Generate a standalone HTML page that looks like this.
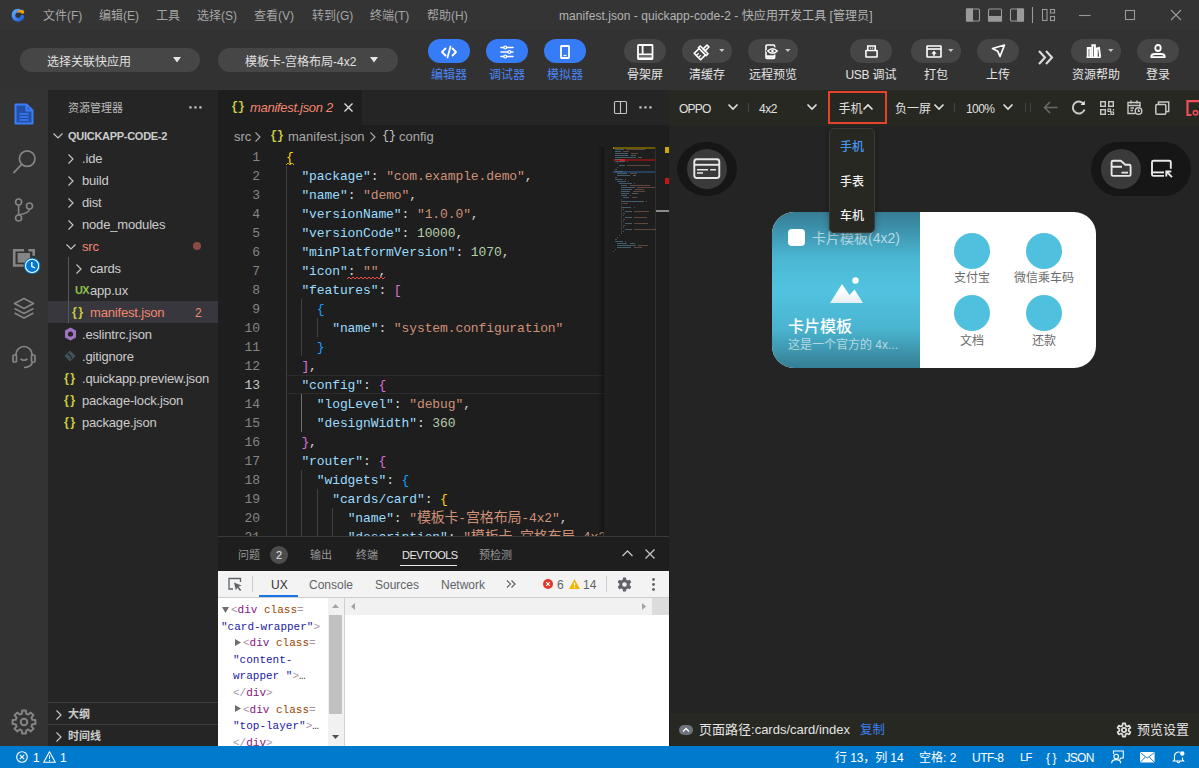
<!DOCTYPE html>
<html lang="zh-CN">
<head>
<meta charset="utf-8">
<title>manifest.json - quickapp-code-2 - 快应用开发工具 [管理员]</title>
<style>
*{box-sizing:border-box;margin:0;padding:0}
html,body{width:1199px;height:768px;overflow:hidden;background:#1e1e1e}
body{position:relative;font-family:"Liberation Sans","Noto Sans CJK SC",sans-serif;font-size:13px;color:#ccc}
.abs{position:absolute}
.t{position:absolute;white-space:nowrap;line-height:1}
svg{position:absolute;overflow:visible}
.mi{top:10px;font-size:12px;color:#a6a6a6}
.pill{top:9px;height:24px;border-radius:12px;background:#464646}
.pill.blue{background:#367cf7}
.sel{top:18px;width:180px;height:24px;border-radius:12px;background:#464646}
.tl{top:39px;width:80px;text-align:center;font-size:12px;color:#e4e4e4}
.tl.bl{color:#4a86f7}
.tr{font-size:13px;color:#ccc;letter-spacing:-0.17px}
.sx{top:5.600px;font-size:12px;color:#fff}
.ln{margin-top:1px;left:0;width:42px;text-align:right;font-family:"Liberation Mono",monospace;font-size:13px;letter-spacing:-0.1px;line-height:19px;color:#858585}
.ln.act{color:#c6c6c6}
.cl{margin-top:1px;left:68px;font-family:"Liberation Mono","Noto Sans CJK SC",monospace;font-size:13px;letter-spacing:-0.1px;line-height:19px;white-space:pre;color:#d4d4d4}
.cl .cj{font-size:14px;letter-spacing:-0.2px}
.k{color:#9cdcfe}.s{color:#ce9178}.n{color:#b5cea8}.p{color:#d4d4d4}.b1{color:#ffd700}.b2{color:#da70d6}.b3{color:#179fff}
.el{margin-top:1px;font-family:"Liberation Mono",monospace;font-size:11px;letter-spacing:0;line-height:17px;color:#333}
.tg{color:#a894a6}.tn{color:#881280}.an{color:#994500}.av{color:#1a1aa6}
.pt{top:13px;font-size:12px;color:#e0e0e0}
.mm{height:1.300px;opacity:.6}
/* regions */
#titlebar{left:0;top:0;width:1199px;height:30px;background:#343434}
#toolbar{left:0;top:30px;width:1199px;height:60px;background:#323232}
#activity{left:0;top:90px;width:48px;height:656px;background:#333333}
#sidebar{left:48px;top:90px;width:170px;height:656px;background:#252526}
#editor{left:218px;top:90px;width:451px;height:446px;background:#1e1e1e;overflow:hidden}
#panel{left:218px;top:536px;width:451px;height:210px;background:#1e1e1e;overflow:hidden}
#preview{left:669px;top:90px;width:530px;height:656px;background:#242424;overflow:hidden}
#status{left:0;top:746px;width:1199px;height:22px;background:#007acc;color:#fff}
</style>
</head>
<body>
<div id="titlebar" class="abs">
<svg style="left:11px;top:7px" width="16" height="16" viewBox="11 7 16 16"><defs><linearGradient id="lg1" x1="0" y1="0" x2="1" y2="1"><stop offset="0" stop-color="#5aa6fb"/><stop offset="1" stop-color="#1f62dc"/></linearGradient></defs><path d="M19.200 10.700A4.600 4.600 0 1 0 22.400 16.800" fill="none" stroke="url(#lg1)" stroke-width="3.700" stroke-linecap="round"/><path d="M16.200 13Q17.600 10.300 21.300 9.800Q24.600 10.100 24.200 12.600Q23.500 14.300 21.700 13.600Q19.600 11.300 16.200 13Z" fill="#fb9e0a"/></svg>
<span class="t mi" style="left:43px">文件(F)</span>
<span class="t mi" style="left:99px">编辑(E)</span>
<span class="t mi" style="left:156px">工具</span>
<span class="t mi" style="left:197px">选择(S)</span>
<span class="t mi" style="left:254px">查看(V)</span>
<span class="t mi" style="left:312px">转到(G)</span>
<span class="t mi" style="left:370px">终端(T)</span>
<span class="t mi" style="left:427px">帮助(H)</span>
<span class="t" id="wtitle" style="left:559px;top:10px;font-size:12px;letter-spacing:0.06px;color:#b4b4b4">manifest.json - quickapp-code-2 - 快应用开发工具 [管理员]</span>
<svg style="left:960px;top:0" width="239" height="30" viewBox="960 0 239 30" fill="none" stroke="#9a9a9a" stroke-width="1.1">
<rect x="966.5" y="9" width="13" height="12" rx="1"/><rect x="966.5" y="9" width="6" height="12" fill="#9a9a9a"/>
<rect x="988.5" y="9" width="13" height="12" rx="1"/><rect x="988.5" y="16.5" width="13" height="4.5" fill="#9a9a9a"/>
<rect x="1010.5" y="9" width="13" height="12" rx="1"/><rect x="1017.5" y="9" width="6" height="12" fill="#9a9a9a"/>
<path d="M1032.5 7V23"/>
<rect x="1042.5" y="9.5" width="4.5" height="11"/><rect x="1050.5" y="9.5" width="4" height="3.5"/><rect x="1050.5" y="16.5" width="4" height="4"/>
<path d="M1079 15.5H1090.500"/>
<rect x="1125.500" y="10.500" width="9" height="9"/>
<path d="M1171 10L1181 20M1181 10L1171 20"/>
</svg>
</div>
<div id="toolbar" class="abs">
<div class="abs sel" style="left:20px"></div><span class="t" style="left:47px;top:26px;font-size:12px;color:#e0e0e0">选择关联快应用</span><svg style="left:173px;top:27px" width="8" height="5.500" viewBox="0 0 9 6"><path d="M0 0H9L4.500 6Z" fill="#e6e6e6"/></svg>
<div class="abs sel" style="left:218px"></div><span class="t" style="left:245px;top:26px;font-size:12px;color:#e0e0e0">模板卡-宫格布局-4x2</span><svg style="left:370px;top:27px" width="8" height="5.500" viewBox="0 0 9 6"><path d="M0 0H9L4.500 6Z" fill="#e6e6e6"/></svg>
<div class="abs pill blue" style="left:428px;width:42px"></div><span class="t tl bl" style="left:409px">编辑器</span>
<svg style="left:441px;top:15px" width="16" height="14" viewBox="0 0 16 14" stroke="#fff" fill="none" stroke-width="1.8" stroke-linecap="round" stroke-linejoin="round"><path d="M4.500 3.500L1 7L4.500 10.500M11.500 3.500L15 7L11.500 10.500M9.500 1.500L6.500 12.500"/></svg>
<div class="abs pill blue" style="left:486px;width:42px"></div><span class="t tl bl" style="left:467px">调试器</span>
<svg style="left:500px;top:14px" width="14" height="16" viewBox="0 0 14 16" stroke="#fff" fill="none" stroke-width="1.6" stroke-linecap="round"><path d="M1 3.500H13M1 8H13M1 12.500H13"/><circle cx="5.300" cy="3.500" r="1.500" fill="#6a9df9" stroke-width="1.200"/><circle cx="9.300" cy="8" r="1.500" fill="#6a9df9" stroke-width="1.200"/><circle cx="5.300" cy="12.500" r="1.500" fill="#6a9df9" stroke-width="1.200"/></svg>
<div class="abs pill blue" style="left:544px;width:42px"></div><span class="t tl bl" style="left:525px">模拟器</span>
<svg style="left:560px;top:15px" width="10" height="14" viewBox="0 0 10 14" stroke="#fff" fill="none" stroke-width="1.8"><rect x="1" y="1" width="8" height="12" rx="0.500"/><path d="M3.500 10.500H6.500" stroke-width="1.200"/></svg>
<div class="abs pill" style="left:624px;width:42px"></div><span class="t tl" style="left:605px">骨架屏</span>
<svg style="left:637px;top:14px" width="16" height="16" viewBox="0 0 16 16" stroke="#fff" fill="none" stroke-width="1.800"><rect x="1" y="1" width="14.500" height="14" rx="0.500"/><path d="M1 10.300H15.500M5.600 1V10.300"/><path d="M1 13.300H15.500" stroke-width="1.200" opacity=".7"/></svg>
<div class="abs pill" style="left:682px;width:50px"></div><span class="t tl" style="left:667px">清缓存</span><svg style="left:718.5px;top:19.300px" width="5.600" height="3" viewBox="0 0 7 4"><path d="M0 0H7L3.500 4Z" fill="#c8c8c8"/></svg>
<svg style="left:692px;top:12px" width="20" height="20" viewBox="-10 -10 20 20" stroke="#fff" fill="none" stroke-width="1.600" stroke-linejoin="round"><g transform="rotate(45)"><rect x="-1.400" y="-8.500" width="2.800" height="5.500"/><rect x="-5.500" y="-3" width="11" height="2.600"/><path d="M-4.500 -0.400V6.500H4.500V-0.400"/><path d="M-1.500 6.500V3.200M1.500 6.500V3.200" stroke-width="1.300"/></g></svg>
<div class="abs pill" style="left:748px;width:50px"></div><span class="t tl" style="left:733px">远程预览</span><svg style="left:784.5px;top:19.300px" width="5.600" height="3" viewBox="0 0 7 4"><path d="M0 0H7L3.500 4Z" fill="#c8c8c8"/></svg>
<svg style="left:764px;top:14px" width="16" height="16" viewBox="764 14 16 16" stroke="#fff" fill="none" stroke-width="1.600"><rect x="766" y="15" width="8.600" height="13.400" rx="1"/><path d="M766 26.500H774.600" stroke-width="2.400"/><path d="M767.700 21Q772.500 15.600 777.300 21Q772.500 26.400 767.700 21Z" fill="#464646" stroke="#464646" stroke-width="3.200"/><path d="M767.700 21Q772.500 16.400 777.300 21Q772.500 25.600 767.700 21Z" stroke-width="1.300"/><circle cx="772.500" cy="21" r="1.300" fill="#fff" stroke="none"/></svg>
<div class="abs pill" style="left:850px;width:42px"></div><span class="t tl" style="left:831px"><span style="letter-spacing:-0.4px">USB</span> 调试</span>
<svg style="left:864.500px;top:15px" width="13" height="13" viewBox="0 0 14 14" stroke="#fff" fill="none" stroke-width="1.700"><path d="M3 6V1H11V6"/><rect x="1" y="6" width="12" height="7" rx="0.500"/><path d="M5.500 3.300H6.500M7.800 3.300H8.800" stroke-width="1.300"/></svg>
<div class="abs pill" style="left:911px;width:50px"></div><span class="t tl" style="left:896px">打包</span><svg style="left:947.5px;top:19.300px" width="5.600" height="3" viewBox="0 0 7 4"><path d="M0 0H7L3.500 4Z" fill="#c8c8c8"/></svg>
<svg style="left:926px;top:15px" width="16" height="13" viewBox="0 0 16 13" stroke="#fff" fill="none" stroke-width="1.600"><rect x="1" y="1" width="14" height="11" rx="0.500"/><path d="M1 4H15"/><path d="M8 10.800V7" stroke-width="1.600"/><path d="M5.300 8.800L8 5.800L10.700 8.800Z" fill="#fff" stroke="none"/></svg>
<div class="abs pill" style="left:977px;width:42px"></div><span class="t tl" style="left:958px">上传</span>
<svg style="left:991px;top:14px" width="15" height="14" viewBox="0 0 15 14" stroke="#fff" fill="none" stroke-width="1.700" stroke-linejoin="round"><path d="M1.500 4.500L13.500 1L9 12.500L6.800 7.300Z"/></svg>
<svg style="left:1038px;top:20px" width="15" height="15" viewBox="0 0 15 15" stroke="#dcdcdc" fill="none" stroke-width="2.100"><path d="M1 1L7 7.500L1 14M8 1L14 7.500L8 14"/></svg>
<div class="abs pill" style="left:1071px;width:50px"></div><span class="t tl" style="left:1056px">资源帮助</span><svg style="left:1107.5px;top:19.300px" width="5.600" height="3" viewBox="0 0 7 4"><path d="M0 0H7L3.500 4Z" fill="#c8c8c8"/></svg>
<svg style="left:1086px;top:14px" width="15" height="14" viewBox="0 0 15 14" stroke="#fff" fill="none" stroke-width="1.600"><path d="M1.700 13V4H4.300V13M6.300 13V1.200H8.900V13M10.800 13V4.500L13 4L14.200 12.800" stroke-width="1.900"/><path d="M0.500 13.300H14.800" stroke-width="1.400"/></svg>
<div class="abs pill" style="left:1137px;width:42px"></div><span class="t tl" style="left:1118px">登录</span>
<svg style="left:1150px;top:14px" width="16" height="14" viewBox="0 0 16 14" stroke="#fff" fill="none" stroke-width="1.800"><ellipse cx="8" cy="4" rx="2.700" ry="3"/><path d="M1.300 13.200V12.500Q1.300 10 5 10H11Q14.700 10 14.700 12.500V13.200Z" stroke-linejoin="round"/></svg>
</div>
<div id="activity" class="abs">
<svg style="left:14px;top:13px" width="20" height="22" viewBox="0 0 20 22" fill="none" stroke="#3b7cf7" stroke-width="2" stroke-linejoin="round"><path d="M1.500 1.500H12.500L18.500 7.500V20.500H1.500Z" fill="#2450a8"/><path d="M12.500 1.500V7.500H18.500"/><path d="M5.500 11H14.500M5.500 14H14.500M5.500 17H14.500" stroke-width="1.500"/></svg>
<svg style="left:0;top:50px" width="48" height="40" viewBox="0 140 48 40" fill="none" stroke="#858585" stroke-width="1.700"><circle cx="27.200" cy="158.600" r="7.800"/><path d="M21.600 164.300L13.400 173.200"/></svg>
<svg style="left:13px;top:108px" width="22" height="24" viewBox="0 0 22 24" fill="none" stroke="#858585" stroke-width="1.600"><circle cx="5.600" cy="4" r="3"/><circle cx="5.600" cy="20" r="3"/><circle cx="16.500" cy="8" r="3"/><path d="M5.600 7V17M16.500 11Q16.500 15 5.600 17"/></svg>
<svg style="left:0;top:150px" width="48" height="40" viewBox="0 240 48 40" fill="none" stroke="#858585" stroke-width="2.600"><path d="M23.700 265.500H14.200V250.300H24M28.400 250.300H33.700V255.800"/><rect x="17.600" y="253" width="12.400" height="9.600" fill="#858585" stroke="none"/><circle cx="32.100" cy="265.900" r="8.200" fill="#0078d4" stroke="none"/><circle cx="32.100" cy="265.900" r="6.600" stroke="#fff" stroke-width="1.100"/><path d="M31.800 262V266.300L35 268" stroke="#fff" stroke-width="1.400"/></svg>
<svg style="left:13px;top:207px" width="22" height="23" viewBox="0 0 22 23" fill="none" stroke="#858585" stroke-width="1.600" stroke-linejoin="round"><path d="M11 1.500L20.500 6.500L11 11.500L1.500 6.500Z"/><path d="M1.500 11.500L11 16.500L20.500 11.500M1.500 16L11 21L20.500 16"/></svg>
<svg style="left:12px;top:255px" width="24" height="24" viewBox="0 0 24 24" fill="none" stroke="#858585" stroke-width="1.700"><path d="M4 11V9.500A8 8 0 0 1 20 9.500V11"/><rect x="1" y="10" width="3.500" height="7" rx="1"/><rect x="19.500" y="10" width="3.500" height="7" rx="1"/><path d="M8.500 14Q12 16.500 15.500 14M20.500 17Q19 22.500 12 22.500"/></svg>
<svg style="left:0;top:612px" width="48" height="40" viewBox="0 612 48 40" fill="none" stroke="#858585" stroke-width="2" stroke-linejoin="round"><path d="M22.1 620.6L25.9 620.6L26.2 623.7L28.3 624.6L30.7 622.6L33.4 625.3L31.4 627.7L32.3 629.8L35.4 630.1L35.4 633.9L32.3 634.2L31.4 636.3L33.4 638.7L30.7 641.4L28.3 639.4L26.2 640.3L25.9 643.4L22.1 643.4L21.8 640.3L19.7 639.4L17.3 641.4L14.6 638.7L16.6 636.3L15.7 634.2L12.6 633.9L12.6 630.1L15.7 629.8L16.6 627.7L14.6 625.3L17.3 622.6L19.7 624.6L21.8 623.7Z"/><circle cx="24" cy="632" r="3.300"/></svg>
</div>
<div id="sidebar" class="abs">
<span class="t" style="left:20px;top:13px;font-size:11px;color:#bbb">资源管理器</span>
<svg style="left:141px;top:16px" width="13" height="3" viewBox="0 0 13 3" fill="#c5c5c5"><rect x="0.300" y="0.300" width="2.300" height="2.300" rx="0.500"/><rect x="5.300" y="0.300" width="2.300" height="2.300" rx="0.500"/><rect x="10.300" y="0.300" width="2.300" height="2.300" rx="0.500"/></svg>
<svg style="left:5px;top:43px" width="10" height="6" viewBox="0 0 10 6" fill="none" stroke="#c5c5c5" stroke-width="1.200"><path d="M0.500 0.500L5 5L9.500 0.500"/></svg>
<span class="t" style="left:20px;top:41px;font-size:11px;font-weight:bold;letter-spacing:-0.28px;color:#ccc">QUICKAPP-CODE-2</span>
<div class="abs" style="left:0;top:211px;width:170px;height:22px;background:#37373d"></div>
<div class="abs" style="left:20px;top:167px;width:1px;height:66px;background:#585858"></div>
<svg style="left:20px;top:64px" width="6" height="10" viewBox="0 0 6 10" fill="none" stroke="#c5c5c5" stroke-width="1.200"><path d="M0.500 0.500L5 5L0.500 9.500"/></svg>
<span class="t tr" style="left:34px;top:62px;color:#ccc">.ide</span>
<svg style="left:20px;top:86px" width="6" height="10" viewBox="0 0 6 10" fill="none" stroke="#c5c5c5" stroke-width="1.200"><path d="M0.500 0.500L5 5L0.500 9.500"/></svg>
<span class="t tr" style="left:34px;top:84px;color:#ccc">build</span>
<svg style="left:20px;top:108px" width="6" height="10" viewBox="0 0 6 10" fill="none" stroke="#c5c5c5" stroke-width="1.200"><path d="M0.500 0.500L5 5L0.500 9.500"/></svg>
<span class="t tr" style="left:34px;top:106px;color:#ccc">dist</span>
<svg style="left:20px;top:130px" width="6" height="10" viewBox="0 0 6 10" fill="none" stroke="#c5c5c5" stroke-width="1.200"><path d="M0.500 0.500L5 5L0.500 9.500"/></svg>
<span class="t tr" style="left:34px;top:128px;color:#ccc">node_modules</span>
<svg style="left:18px;top:154px" width="10" height="6" viewBox="0 0 10 6" fill="none" stroke="#c5c5c5" stroke-width="1.200"><path d="M0.500 0.500L5 5L9.500 0.500"/></svg>
<span class="t tr" style="left:34px;top:150px;color:#f48771">src</span>
<svg style="left:28px;top:174px" width="6" height="10" viewBox="0 0 6 10" fill="none" stroke="#c5c5c5" stroke-width="1.200"><path d="M0.500 0.500L5 5L0.500 9.500"/></svg>
<span class="t tr" style="left:42px;top:172px;color:#ccc">cards</span>
<div class="abs" style="left:145px;top:152px;width:8px;height:8px;border-radius:50%;background:#8a4a45"></div>
<span class="t" style="left:27px;top:195px;font-size:11px;font-weight:bold;color:#8dc149;letter-spacing:-0.8px">UX</span>
<span class="t tr" style="left:42px;top:194px">app.ux</span>
<span class="t" style="left:24px;top:216px;font-size:12.500px;font-weight:bold;color:#cbcb41;letter-spacing:1.500px">{}</span>
<span class="t tr" style="left:42px;top:216px;color:#f48771">manifest.json</span>
<span class="t" style="left:147px;top:217px;font-size:12px;color:#f48771">2</span>
<svg style="left:16px;top:237px" width="13" height="14" viewBox="0 0 13 14"><path d="M6.500 0.500L12 3.500V10.500L6.500 13.500L1 10.500V3.500Z" fill="#a074c4"/><circle cx="6.500" cy="7" r="2.600" fill="#252526"/></svg>
<span class="t tr" style="left:34px;top:238px">.eslintrc.json</span>
<svg style="left:16px;top:260px" width="12" height="12" viewBox="0 0 12 12"><path d="M6 0.500L11.500 6L6 11.500L0.500 6Z" fill="#41535b"/><path d="M4 3.500L7 6.500M7 6.500V9M7 6.500" stroke="#252526" stroke-width="1.200" fill="none"/></svg>
<span class="t tr" style="left:34px;top:260px">.gitignore</span>
<span class="t" style="left:16px;top:282px;font-size:12.500px;font-weight:bold;color:#cbcb41;letter-spacing:1.500px">{}</span>
<span class="t tr" style="left:34px;top:282px">.quickapp.preview.json</span>
<span class="t" style="left:16px;top:304px;font-size:12.500px;font-weight:bold;color:#cbcb41;letter-spacing:1.500px">{}</span>
<span class="t tr" style="left:34px;top:304px">package-lock.json</span>
<span class="t" style="left:16px;top:326px;font-size:12.500px;font-weight:bold;color:#cbcb41;letter-spacing:1.500px">{}</span>
<span class="t tr" style="left:34px;top:326px">package.json</span>
<div class="abs" style="left:0;top:612px;width:170px;height:1px;background:#3c3c3c"></div>
<div class="abs" style="left:0;top:634px;width:170px;height:1px;background:#3c3c3c"></div>
<svg style="left:8px;top:619.500px" width="6" height="10" viewBox="0 0 6 10" fill="none" stroke="#c5c5c5" stroke-width="1.200"><path d="M0.500 0.500L5 5L0.500 9.500"/></svg>
<span class="t" style="left:20px;top:619px;font-size:11px;font-weight:bold;color:#ccc">大纲</span>
<svg style="left:8px;top:641.500px" width="6" height="10" viewBox="0 0 6 10" fill="none" stroke="#c5c5c5" stroke-width="1.200"><path d="M0.500 0.500L5 5L0.500 9.500"/></svg>
<span class="t" style="left:20px;top:641px;font-size:11px;font-weight:bold;color:#ccc">时间线</span>
</div>
<div id="editor" class="abs">
<div class="abs" style="left:0;top:0;width:451px;height:35px;background:#252526"></div>
<div class="abs" style="left:0;top:0;width:144px;height:35px;background:#1e1e1e"></div>
<span class="t" style="left:13px;top:11px;font-size:12px;font-weight:bold;color:#cbcb41;font-family:'Liberation Mono',monospace;letter-spacing:-0.5px">{}</span>
<span class="t" style="left:32px;top:11px;font-size:13px;font-style:italic;color:#f48771;letter-spacing:-0.3px">manifest.json 2</span>
<svg style="left:126px;top:13px" width="9" height="9" viewBox="0 0 9 9" stroke="#e0e0e0" stroke-width="1.300" fill="none"><path d="M0.500 0.500L8.500 8.500M8.500 0.500L0.500 8.500"/></svg>
<svg style="left:396px;top:11px" width="13" height="13" viewBox="0 0 13 13" stroke="#c5c5c5" stroke-width="1.100" fill="none"><rect x="0.500" y="0.500" width="12" height="12" rx="1"/><path d="M6.500 0.500V12.500"/></svg>
<svg style="left:421px;top:16px" width="13" height="3" viewBox="0 0 13 3" fill="#c5c5c5"><rect x="0.300" y="0.300" width="2.300" height="2.300" rx="0.500"/><rect x="5.300" y="0.300" width="2.300" height="2.300" rx="0.500"/><rect x="10.300" y="0.300" width="2.300" height="2.300" rx="0.500"/></svg>
<span class="t" style="left:16px;top:40px;font-size:13px;color:#a9a9a9">src</span>
<svg style="left:37px;top:42px" width="6" height="10" viewBox="0 0 6 10" fill="none" stroke="#a9a9a9" stroke-width="1.100"><path d="M0.500 0.500L5 5L0.500 9.500"/></svg>
<span class="t" style="left:52px;top:40px;font-size:12px;font-weight:bold;color:#cbcb41;font-family:'Liberation Mono',monospace;letter-spacing:-0.5px">{}</span>
<span class="t" style="left:70px;top:40px;font-size:13px;color:#a9a9a9">manifest.json</span>
<svg style="left:152px;top:42px" width="6" height="10" viewBox="0 0 6 10" fill="none" stroke="#a9a9a9" stroke-width="1.100"><path d="M0.500 0.500L5 5L0.500 9.500"/></svg>
<span class="t" style="left:164px;top:40px;font-size:12px;color:#c5c5c5;font-family:'Liberation Mono',monospace;letter-spacing:-0.5px">{}</span>
<span class="t" style="left:181px;top:40px;font-size:13px;color:#a9a9a9">config</span>
<div class="abs" style="left:68px;top:285px;width:318px;height:19px;border-top:1px solid #2c2c2c;border-bottom:1px solid #2c2c2c"></div>
<div class="abs" style="left:68.0px;top:76px;width:1px;height:380px;background:#404040"></div>
<div class="abs" style="left:83.4px;top:209px;width:1px;height:57px;background:#404040"></div>
<div class="abs" style="left:98.8px;top:228px;width:1px;height:19px;background:#404040"></div>
<div class="abs" style="left:83.4px;top:304px;width:1px;height:38px;background:#707070"></div>
<div class="abs" style="left:83.4px;top:380px;width:1px;height:76px;background:#404040"></div>
<div class="abs" style="left:98.8px;top:399px;width:1px;height:57px;background:#404040"></div>
<div class="abs" style="left:114.2px;top:418px;width:1px;height:38px;background:#404040"></div>
<span class="t ln" style="top:57px">1</span>
<span class="t cl" style="top:57px"><span class="b1 wy">{</span></span>
<span class="t ln" style="top:76px">2</span>
<span class="t cl" style="top:76px">  <span class="k">"package"</span><span class="p">: </span><span class="s">"com.example.demo"</span><span class="p">,</span></span>
<span class="t ln" style="top:95px">3</span>
<span class="t cl" style="top:95px">  <span class="k">"name"</span><span class="p">: </span><span class="s">"demo"</span><span class="p">,</span></span>
<span class="t ln" style="top:114px">4</span>
<span class="t cl" style="top:114px">  <span class="k">"versionName"</span><span class="p">: </span><span class="s">"1.0.0"</span><span class="p">,</span></span>
<span class="t ln" style="top:133px">5</span>
<span class="t cl" style="top:133px">  <span class="k">"versionCode"</span><span class="p">: </span><span class="n">10000</span><span class="p">,</span></span>
<span class="t ln" style="top:152px">6</span>
<span class="t cl" style="top:152px">  <span class="k">"minPlatformVersion"</span><span class="p">: </span><span class="n">1070</span><span class="p">,</span></span>
<span class="t ln" style="top:171px">7</span>
<span class="t cl" style="top:171px">  <span class="k">"icon"</span><span class="sq"><span class="p">: </span><span class="s">""</span><span class="p">,</span></span></span>
<span class="t ln" style="top:190px">8</span>
<span class="t cl" style="top:190px">  <span class="k">"features"</span><span class="p">: </span><span class="b2">[</span></span>
<span class="t ln" style="top:209px">9</span>
<span class="t cl" style="top:209px">    <span class="b3">{</span></span>
<span class="t ln" style="top:228px">10</span>
<span class="t cl" style="top:228px">      <span class="k">"name"</span><span class="p">: </span><span class="s">"system.configuration"</span></span>
<span class="t ln" style="top:247px">11</span>
<span class="t cl" style="top:247px">    <span class="b3">}</span></span>
<span class="t ln" style="top:266px">12</span>
<span class="t cl" style="top:266px">  <span class="b2">]</span><span class="p">,</span></span>
<span class="t ln act" style="top:285px">13</span>
<span class="t cl" style="top:285px">  <span class="k">"config"</span><span class="p">: </span><span class="b2">{</span></span>
<span class="t ln" style="top:304px">14</span>
<span class="t cl" style="top:304px">    <span class="k">"logLevel"</span><span class="p">: </span><span class="s">"debug"</span><span class="p">,</span></span>
<span class="t ln" style="top:323px">15</span>
<span class="t cl" style="top:323px">    <span class="k">"designWidth"</span><span class="p">: </span><span class="n">360</span></span>
<span class="t ln" style="top:342px">16</span>
<span class="t cl" style="top:342px">  <span class="b2">}</span><span class="p">,</span></span>
<span class="t ln" style="top:361px">17</span>
<span class="t cl" style="top:361px">  <span class="k">"router"</span><span class="p">: </span><span class="b2">{</span></span>
<span class="t ln" style="top:380px">18</span>
<span class="t cl" style="top:380px">    <span class="k">"widgets"</span><span class="p">: </span><span class="b3">{</span></span>
<span class="t ln" style="top:399px">19</span>
<span class="t cl" style="top:399px">      <span class="k">"cards/card"</span><span class="p">: </span><span class="b1">{</span></span>
<span class="t ln" style="top:418px">20</span>
<span class="t cl" style="top:418px">        <span class="k">"name"</span><span class="p">: </span><span class="s">"<span class="cj">模板卡</span>-<span class="cj">宫格布局</span>-4x2"</span><span class="p">,</span></span>
<span class="t ln" style="top:437px">21</span>
<span class="t cl" style="top:437px">        <span class="k">"description"</span><span class="p">: </span><span class="s">"<span class="cj">模板卡</span>-<span class="cj">宫格布局</span>-4x2"</span><span class="p">,</span></span>
<svg style="left:129px;top:186px" width="39" height="4" viewBox="0 0 39 4" fill="none" stroke="#f14c4c" stroke-width="1"><path d="M0 3L2 1L4 3L6 1L8 3L10 1L12 3L14 1L16 3L18 1L20 3L22 1L24 3L26 1L28 3L30 1L32 3L34 1L36 3L38 1"/></svg><svg style="left:68px;top:72px" width="8" height="4" viewBox="0 0 8 4" fill="none" stroke="#cca700" stroke-width="1"><path d="M0 3L2 1L4 3L6 1L8 3"/></svg>
<div class="abs" style="left:386px;top:57px;width:65px;height:393px;background:#1e1e1e"></div>
<div class="abs" style="left:380px;top:57px;width:6px;height:393px;background:linear-gradient(to right,rgba(0,0,0,0),rgba(0,0,0,.35))"></div>
<div class="abs" style="left:437px;top:57px;width:1px;height:393px;background:#303030"></div>
<div class="abs" style="left:395px;top:57px;width:42px;height:2px;background:#6b5a00"></div>
<div class="abs" style="left:395px;top:69px;width:42px;height:2px;background:#7a1616"></div>
<div class="abs" style="left:402px;top:69px;width:5px;height:2px;background:#e01515"></div>
<div class="abs" style="left:395px;top:81px;width:42px;height:2px;background:#23405f"></div>
<div class="abs" style="left:395.0px;top:57px;width:0.9px;height:2px;background:#a08a10;opacity:.75"></div>
<div class="abs mm" style="left:395.0px;top:57px;width:1.0px;background:#a08a10"></div>
<div class="abs mm" style="left:397.1px;top:59px;width:9.3px;background:#5b86a0"></div>
<div class="abs mm" style="left:408.4px;top:59px;width:18.5px;background:#8a6352"></div>
<div class="abs mm" style="left:397.1px;top:61px;width:6.2px;background:#5b86a0"></div>
<div class="abs mm" style="left:405.3px;top:61px;width:6.2px;background:#8a6352"></div>
<div class="abs mm" style="left:397.1px;top:63px;width:13.4px;background:#5b86a0"></div>
<div class="abs mm" style="left:412.5px;top:63px;width:7.2px;background:#8a6352"></div>
<div class="abs mm" style="left:397.1px;top:65px;width:13.4px;background:#5b86a0"></div>
<div class="abs mm" style="left:412.5px;top:65px;width:5.2px;background:#76866d"></div>
<div class="abs mm" style="left:397.1px;top:67px;width:20.6px;background:#5b86a0"></div>
<div class="abs mm" style="left:419.7px;top:67px;width:4.1px;background:#76866d"></div>
<div class="abs mm" style="left:397.1px;top:69px;width:6.2px;background:#5b86a0"></div>
<div class="abs mm" style="left:397.1px;top:71px;width:10.3px;background:#5b86a0"></div>
<div class="abs mm" style="left:409.4px;top:71px;width:1.0px;background:#707070"></div>
<div class="abs mm" style="left:399.1px;top:73px;width:1.0px;background:#707070"></div>
<div class="abs mm" style="left:401.2px;top:75px;width:6.2px;background:#5b86a0"></div>
<div class="abs mm" style="left:409.4px;top:75px;width:22.7px;background:#8a6352"></div>
<div class="abs mm" style="left:399.1px;top:77px;width:1.0px;background:#707070"></div>
<div class="abs mm" style="left:397.1px;top:79px;width:2.1px;background:#707070"></div>
<div class="abs mm" style="left:397.1px;top:81px;width:8.2px;background:#5b86a0"></div>
<div class="abs mm" style="left:407.4px;top:81px;width:1.0px;background:#707070"></div>
<div class="abs mm" style="left:399.1px;top:83px;width:10.3px;background:#5b86a0"></div>
<div class="abs mm" style="left:411.5px;top:83px;width:7.2px;background:#8a6352"></div>
<div class="abs mm" style="left:399.1px;top:85px;width:13.4px;background:#5b86a0"></div>
<div class="abs mm" style="left:414.6px;top:85px;width:3.1px;background:#76866d"></div>
<div class="abs mm" style="left:397.1px;top:87px;width:2.1px;background:#707070"></div>
<div class="abs mm" style="left:397.1px;top:89px;width:8.2px;background:#5b86a0"></div>
<div class="abs mm" style="left:407.4px;top:89px;width:1.0px;background:#707070"></div>
<div class="abs mm" style="left:399.1px;top:91px;width:9.3px;background:#5b86a0"></div>
<div class="abs mm" style="left:410.4px;top:91px;width:1.0px;background:#707070"></div>
<div class="abs mm" style="left:401.2px;top:93px;width:12.4px;background:#5b86a0"></div>
<div class="abs mm" style="left:415.6px;top:93px;width:1.0px;background:#707070"></div>
<div class="abs mm" style="left:403.2px;top:95px;width:6.2px;background:#5b86a0"></div>
<div class="abs mm" style="left:411.5px;top:95px;width:20.6px;background:#8a6352"></div>
<div class="abs mm" style="left:403.2px;top:97px;width:13.4px;background:#5b86a0"></div>
<div class="abs mm" style="left:418.7px;top:97px;width:18.0px;background:#8a6352"></div>
<div class="abs mm" style="left:403.2px;top:99px;width:11.3px;background:#5b86a0"></div>
<div class="abs mm" style="left:416.6px;top:99px;width:9.3px;background:#8a6352"></div>
<div class="abs mm" style="left:403.2px;top:101px;width:9.3px;background:#5b86a0"></div>
<div class="abs mm" style="left:414.6px;top:101px;width:12.4px;background:#8a6352"></div>
<div class="abs mm" style="left:403.2px;top:103px;width:8.2px;background:#5b86a0"></div>
<div class="abs mm" style="left:413.5px;top:103px;width:6.2px;background:#76866d"></div>
<div class="abs mm" style="left:403.2px;top:105px;width:6.2px;background:#5b86a0"></div>
<div class="abs mm" style="left:411.5px;top:105px;width:1.0px;background:#707070"></div>
<div class="abs mm" style="left:405.3px;top:107px;width:6.2px;background:#5b86a0"></div>
<div class="abs mm" style="left:413.5px;top:107px;width:5.2px;background:#8a6352"></div>
<div class="abs mm" style="left:403.2px;top:109px;width:1.0px;background:#707070"></div>
<div class="abs mm" style="left:403.2px;top:111px;width:22.7px;background:#5b86a0"></div>
<div class="abs mm" style="left:428.0px;top:111px;width:1.0px;background:#707070"></div>
<div class="abs mm" style="left:405.3px;top:113px;width:5.2px;background:#8a6352"></div>
<div class="abs mm" style="left:403.2px;top:115px;width:1.0px;background:#707070"></div>
<div class="abs mm" style="left:403.2px;top:117px;width:10.3px;background:#5b86a0"></div>
<div class="abs mm" style="left:415.6px;top:117px;width:1.0px;background:#707070"></div>
<div class="abs mm" style="left:405.3px;top:119px;width:1.0px;background:#707070"></div>
<div class="abs mm" style="left:407.4px;top:121px;width:6.2px;background:#5b86a0"></div>
<div class="abs mm" style="left:415.6px;top:121px;width:15.5px;background:#8a6352"></div>
<div class="abs mm" style="left:405.3px;top:123px;width:2.1px;background:#707070"></div>
<div class="abs mm" style="left:405.3px;top:125px;width:1.0px;background:#707070"></div>
<div class="abs mm" style="left:407.4px;top:127px;width:6.2px;background:#5b86a0"></div>
<div class="abs mm" style="left:415.6px;top:127px;width:13.4px;background:#8a6352"></div>
<div class="abs mm" style="left:405.3px;top:129px;width:2.1px;background:#707070"></div>
<div class="abs mm" style="left:405.3px;top:131px;width:1.0px;background:#707070"></div>
<div class="abs mm" style="left:407.4px;top:133px;width:6.2px;background:#5b86a0"></div>
<div class="abs mm" style="left:415.6px;top:133px;width:14.4px;background:#8a6352"></div>
<div class="abs mm" style="left:405.3px;top:135px;width:2.1px;background:#707070"></div>
<div class="abs mm" style="left:405.3px;top:137px;width:1.0px;background:#707070"></div>
<div class="abs mm" style="left:407.4px;top:139px;width:6.2px;background:#5b86a0"></div>
<div class="abs mm" style="left:415.6px;top:139px;width:22.7px;background:#8a6352"></div>
<div class="abs mm" style="left:405.3px;top:141px;width:1.0px;background:#707070"></div>
<div class="abs mm" style="left:403.2px;top:143px;width:1.0px;background:#707070"></div>
<div class="abs mm" style="left:401.2px;top:145px;width:1.0px;background:#707070"></div>
<div class="abs mm" style="left:399.1px;top:147px;width:1.0px;background:#707070"></div>
<div class="abs mm" style="left:397.1px;top:149px;width:2.1px;background:#707070"></div>
<div class="abs mm" style="left:397.1px;top:151px;width:8.2px;background:#5b86a0"></div>
<div class="abs mm" style="left:407.4px;top:151px;width:1.0px;background:#707070"></div>
<div class="abs mm" style="left:399.1px;top:153px;width:10.3px;background:#5b86a0"></div>
<div class="abs mm" style="left:411.5px;top:153px;width:5.2px;background:#76866d"></div>
<div class="abs mm" style="left:399.1px;top:155px;width:18.5px;background:#5b86a0"></div>
<div class="abs mm" style="left:419.7px;top:155px;width:10.3px;background:#8a6352"></div>
<div class="abs mm" style="left:399.1px;top:157px;width:14.4px;background:#5b86a0"></div>
<div class="abs mm" style="left:415.6px;top:157px;width:8.2px;background:#8a6352"></div>
<div class="abs mm" style="left:397.1px;top:159px;width:1.0px;background:#707070"></div>
<div class="abs mm" style="left:395.0px;top:161px;width:1.0px;background:#707070"></div>
<div class="abs" style="left:403px;top:109px;width:1px;height:34px;background:#3a3a3a"></div>
<div class="abs" style="left:447px;top:57px;width:4px;height:6px;background:#cca700"></div>
<div class="abs" style="left:447px;top:88px;width:4px;height:6px;background:#c21717"></div>
<div class="abs" style="left:438px;top:120px;width:13px;height:2px;background:#8a8a8a"></div>
</div>
<div id="panel" class="abs">
<div class="abs" style="left:0;top:0;width:451px;height:1px;background:#3a3a3a"></div>
<span class="t" style="left:20px;top:14px;font-size:11px;color:#969696">问题</span>
<div class="abs" style="left:52px;top:10px;width:18px;height:18px;border-radius:9px;background:#4d4d4d"></div><span class="t" style="left:52px;top:14px;width:18px;text-align:center;font-size:11px;color:#e7e7e7">2</span>
<span class="t" style="left:92px;top:14px;font-size:11px;color:#969696">输出</span>
<span class="t" style="left:138px;top:14px;font-size:11px;color:#969696">终端</span>
<span class="t" style="left:184px;top:14px;font-size:11px;letter-spacing:-0.5px;color:#e7e7e7">DEVTOOLS</span>
<div class="abs" style="left:182px;top:29px;width:57px;height:1px;background:#e7e7e7"></div>
<span class="t" style="left:261px;top:14px;font-size:11px;color:#969696">预检测</span>
<svg style="left:404px;top:14px" width="11" height="7" viewBox="0 0 11 7" fill="none" stroke="#c5c5c5" stroke-width="1.300"><path d="M0.500 6L5.500 1L10.500 6"/></svg>
<svg style="left:427px;top:13px" width="10" height="10" viewBox="0 0 10 10" fill="none" stroke="#c5c5c5" stroke-width="1.300"><path d="M0.500 0.500L9.500 9.500M9.500 0.500L0.500 9.500"/></svg>
<div class="abs" style="left:0;top:35px;width:451px;height:175px;background:#fff"></div>
<div class="abs" style="left:0;top:35px;width:451px;height:27px;background:#f3f3f3;border-bottom:1px solid #cdcdcd"></div>
<svg style="left:10px;top:41px" width="15" height="15" viewBox="0 0 15 15" fill="none" stroke="#5f6368" stroke-width="1.300"><path d="M12.500 5V1.500H1V12H5"/><path d="M6 5.500L13.500 8.500L10.500 9.800L13.300 13L12 14L9.300 10.800L7.800 13.300Z" fill="#5f6368" stroke="none"/></svg>
<div class="abs" style="left:34px;top:40px;width:1px;height:16px;background:#ccc"></div>
<span class="t" style="left:53px;top:43px;font-size:12px;color:#333">UX</span>
<div class="abs" style="left:41px;top:59px;width:39px;height:2px;background:#1a73e8"></div>
<span class="t" style="left:91px;top:43px;font-size:12px;color:#5f6368">Console</span><span class="t" style="left:157px;top:43px;font-size:12px;color:#5f6368">Sources</span><span class="t" style="left:223px;top:43px;font-size:12px;color:#5f6368">Network</span>
<svg style="left:288px;top:44px" width="10" height="8" viewBox="0 0 10 8" fill="none" stroke="#5f6368" stroke-width="1.200"><path d="M1 0.500L4.500 4L1 7.500M5.500 0.500L9 4L5.500 7.500"/></svg>
<svg style="left:325px;top:43px" width="10" height="10" viewBox="0 0 10 10"><circle cx="5" cy="5" r="5" fill="#e8342c"/><path d="M3.200 3.200L6.800 6.800M6.800 3.200L3.200 6.800" stroke="#fff" stroke-width="1.200"/></svg>
<span class="t" style="left:339px;top:43px;font-size:12px;color:#5f6368">6</span>
<svg style="left:351px;top:43px" width="11" height="10" viewBox="0 0 11 10"><path d="M5.500 0L11 10H0Z" fill="#f5b400"/><path d="M5.500 3.500V6.500M5.500 7.500V8.700" stroke="#fff" stroke-width="1.200"/></svg>
<span class="t" style="left:365px;top:43px;font-size:12px;color:#5f6368">14</span>
<div class="abs" style="left:388px;top:40px;width:1px;height:16px;background:#ccc"></div>
<svg style="left:399px;top:41px" width="15" height="15" viewBox="0 0 26 26" fill="#5f6368"><path fill-rule="evenodd" d="M10.500 1H15.500L16.200 4.600L18.900 6.200L22.300 4.900L24.800 9.200L22 11.500V14.500L24.800 16.800L22.300 21.100L18.900 19.800L16.200 21.400L15.500 25H10.500L9.800 21.400L7.100 19.800L3.700 21.100L1.200 16.800L4 14.500V11.500L1.200 9.200L3.700 4.900L7.100 6.200L9.800 4.600ZM13 9A4 4 0 1 0 13 17A4 4 0 1 0 13 9Z"/></svg>
<svg style="left:434px;top:42px" width="3" height="13" viewBox="0 0 3 13" fill="#5f6368"><circle cx="1.500" cy="1.500" r="1.400"/><circle cx="1.500" cy="6.500" r="1.400"/><circle cx="1.500" cy="11.500" r="1.400"/></svg>
<span class="t el" style="left:13px;top:65px"><span class="tg">&lt;</span><span class="tn">div </span><span class="an">class</span><span class="tg">=</span></span>
<span class="t el" style="left:3px;top:81.6px"><span class="av">"card-wrapper"</span><span class="tg">&gt;</span></span>
<span class="t el" style="left:25px;top:98.2px"><span class="tg">&lt;</span><span class="tn">div </span><span class="an">class</span><span class="tg">=</span></span>
<span class="t el" style="left:15px;top:114.8px"><span class="av">"content-</span></span>
<span class="t el" style="left:15px;top:131.4px"><span class="av">wrapper "</span><span class="tg">&gt;</span>…</span>
<span class="t el" style="left:15px;top:148px"><span class="tg">&lt;/</span><span class="tn">div</span><span class="tg">&gt;</span></span>
<span class="t el" style="left:25px;top:164.6px"><span class="tg">&lt;</span><span class="tn">div </span><span class="an">class</span><span class="tg">=</span></span>
<span class="t el" style="left:15px;top:181.2px"><span class="av">"top-layer"</span><span class="tg">&gt;</span>…</span>
<span class="t el" style="left:15px;top:197.8px"><span class="tg">&lt;/</span><span class="tn">div</span><span class="tg">&gt;</span></span>
<svg style="left:4px;top:70.500px" width="7" height="6" viewBox="0 0 7 6"><path d="M0 0H7L3.500 6Z" fill="#6e6e6e"/></svg>
<svg style="left:16.500px;top:102.500px" width="6" height="7" viewBox="0 0 6 7"><path d="M0 0V7L6 3.500Z" fill="#6e6e6e"/></svg>
<svg style="left:16.500px;top:168.500px" width="6" height="7" viewBox="0 0 6 7"><path d="M0 0V7L6 3.500Z" fill="#6e6e6e"/></svg>
<div class="abs" style="left:110px;top:62px;width:16px;height:148px;background:#f1f1f1"></div>
<div class="abs" style="left:111px;top:79px;width:13px;height:99px;background:#c1c1c1"></div>
<svg style="left:114px;top:68px" width="7" height="4" viewBox="0 0 7 4"><path d="M0 4H7L3.500 0Z" fill="#a3a3a3"/></svg>
<svg style="left:114px;top:199px" width="7" height="4" viewBox="0 0 7 4"><path d="M0 0H7L3.500 4Z" fill="#505050"/></svg>
<div class="abs" style="left:126px;top:62px;width:1px;height:148px;background:#d0d0d0"></div>
<div class="abs" style="left:127px;top:62px;width:324px;height:17px;background:#f1f1f1"></div>
<div class="abs" style="left:434px;top:62px;width:17px;height:17px;background:#dcdcdc"></div>
<svg style="left:133px;top:67px" width="4" height="7" viewBox="0 0 4 7"><path d="M4 0V7L0 3.500Z" fill="#a3a3a3"/></svg>
<svg style="left:424px;top:67px" width="4" height="7" viewBox="0 0 4 7"><path d="M0 0V7L4 3.500Z" fill="#a3a3a3"/></svg>
</div>
<div id="preview" class="abs"><div class="abs" style="left:-1px;top:0;width:531px;height:656px">
<div class="abs" style="left:1px;top:481px;width:1px;height:175px;background:#1c1c1c"></div>
<div class="abs" style="left:1px;top:0;width:530px;height:36px;background:#272822"></div>
<span class="t pt" style="left:11px;letter-spacing:-0.8px">OPPO</span><svg style="left:60px;top:14px" width="10" height="6" viewBox="0 0 10 6" fill="none" stroke="#e2e2e2" stroke-width="1.600"><path d="M0.500 0.500L5 5L9.500 0.500"/></svg><div class="abs" style="left:80px;top:13px;width:1px;height:9px;background:#444"></div>
<span class="t pt" style="left:91px;letter-spacing:-0.5px">4x2</span><svg style="left:139px;top:14px" width="10" height="6" viewBox="0 0 10 6" fill="none" stroke="#e2e2e2" stroke-width="1.600"><path d="M0.500 0.500L5 5L9.500 0.500"/></svg>
<div class="abs" style="left:160px;top:1px;width:59px;height:33px;border:2px solid #e5432c"></div>
<span class="t pt" style="left:170.500px">手机</span><svg style="left:195px;top:14px" width="10" height="6" viewBox="0 0 10 6" fill="none" stroke="#e8e8e8" stroke-width="1.600"><path d="M0.500 5.500L5 1L9.500 5.500"/></svg>
<span class="t pt" style="left:227px">负一屏</span><svg style="left:266px;top:14px" width="10" height="6" viewBox="0 0 10 6" fill="none" stroke="#e2e2e2" stroke-width="1.600"><path d="M0.500 0.500L5 5L9.500 0.500"/></svg><div class="abs" style="left:286px;top:13px;width:1px;height:9px;background:#444"></div>
<span class="t pt" style="left:298px;letter-spacing:-0.6px">100%</span><svg style="left:335px;top:14px" width="10" height="6" viewBox="0 0 10 6" fill="none" stroke="#e2e2e2" stroke-width="1.600"><path d="M0.500 0.500L5 5L9.500 0.500"/></svg><div class="abs" style="left:357px;top:13px;width:1px;height:9px;background:#444"></div><div class="abs" style="left:362px;top:13px;width:1px;height:9px;background:#444"></div>
<svg style="left:375px;top:11px" width="15" height="13" viewBox="0 0 15 13" fill="none" stroke="#6a6a6a" stroke-width="1.500"><path d="M14.500 6.500H1.500M7 1L1.500 6.500L7 12"/></svg>
<svg style="left:403px;top:10px" width="15" height="15" viewBox="0 0 15 15" fill="none" stroke="#c8c8c8" stroke="#e4e4e4" stroke-width="2"><path d="M12.800 4.200A6 6 0 1 0 13.500 9.500"/><path d="M13.800 0.800V5H9.600Z" fill="#e4e4e4" stroke="none"/></svg>
<svg style="left:432px;top:11px" width="14" height="14" viewBox="0 0 14 14" fill="none" stroke="#c8c8c8" stroke-width="1.400"><rect x="0.700" y="0.700" width="4.600" height="4.600"/><rect x="8.700" y="0.700" width="4.600" height="4.600"/><rect x="0.700" y="8.700" width="4.600" height="4.600"/><path d="M8 8H10.500V10.500H8ZM11 11H13.500V13.500H11ZM13.500 8V9.500M8 13.500H9.500" stroke-width="1.200"/></svg>
<svg style="left:459px;top:10px" width="16" height="15" viewBox="0 0 16 15" fill="none" stroke="#c8c8c8" stroke-width="1.400"><path d="M8 13.500H1V2.500H13V7"/><path d="M1 5.500H13M4 0.500V3.500M10 0.500V3.500M3.500 8H7M3.500 10.500H6"/><circle cx="11.500" cy="11" r="3.300"/><path d="M11.500 9.300V11.200H13"/></svg>
<svg style="left:487px;top:11px" width="15" height="14" viewBox="0 0 15 14" fill="none" stroke="#c8c8c8" stroke-width="1.500"><rect x="0.800" y="3.500" width="10" height="9.700" rx="1"/><path d="M3.500 3.500V1H13.700V10.500H11"/></svg>
<svg style="left:518px;top:10px" width="13" height="17" viewBox="0 0 13 17" fill="none" stroke="#ee4f5a" stroke-width="2.200"><path d="M13 1.200H1.500V15H5.500"/><circle cx="9.500" cy="12.800" r="2.200" stroke-width="1.600"/></svg>
<div class="abs" style="left:9px;top:52px;width:60px;height:54px;border-radius:50%;background:#161616"></div>
<div class="abs" style="left:19px;top:59px;width:40px;height:40px;border-radius:20px;background:#3a3a3a"></div>
<svg style="left:22px;top:64px" width="34" height="28" viewBox="22 64 34 28" fill="none" stroke="#e8e8e8" stroke-width="1.900"><rect x="26.300" y="69.200" width="25" height="18.800" rx="2.500"/><path d="M26.300 74.800H51.300"/><path d="M29 79.700H40M42.200 79.700H48M29 83H35" stroke-width="1.500"/></svg>
<div class="abs" style="left:423px;top:52px;width:100px;height:54px;border-radius:27px;background:#161616"></div>
<div class="abs" style="left:433px;top:59px;width:40px;height:40px;border-radius:20px;background:#3a3a3a"></div>
<svg style="left:440px;top:66px" width="26" height="24" viewBox="440 66 26 24" fill="none" stroke="#e8e8e8" stroke-width="1.900" stroke-linejoin="round"><path d="M443.600 72.300Q443.600 70.800 445.100 70.800H452.800L457.300 74.800H461.100Q462.600 74.800 462.600 76.300V84.400Q462.600 85.900 461.100 85.900H445.100Q443.600 85.900 443.600 84.400Z"/><path d="M443.600 76.800H454M453.500 82.600H460"/></svg>
<svg style="left:480px;top:66px" width="28" height="24" viewBox="480 66 28 24" fill="none" stroke="#e8e8e8" stroke-width="1.900"><path d="M502.800 78.700V72.300Q502.800 70.800 501.300 70.800H485.500Q484 70.800 484 72.300V84.400Q484 85.900 485.500 85.900H496" stroke-linejoin="round"/><path d="M484 82.400H496"/><path d="M498.300 86.500V81.500H503.300M499 82.200L504 87.200"/></svg>
<div class="abs" id="card" style="left:104px;top:122px;width:324px;height:156px;border-radius:22px;background:#fff;overflow:hidden"><div class="abs" style="left:0;top:0;width:148px;height:156px;background:linear-gradient(to bottom,#357c94 0%,#4bb7d3 30%,#51c3e0 50%,#4ab4cf 75%,#357e93 100%)"></div></div>
<div class="abs" style="left:120px;top:139px;width:17px;height:17px;border-radius:4px;background:#fff"></div>
<span class="t" style="left:144px;top:141px;font-size:14px;color:rgba(255,255,255,.62)">卡片模板(4x2)</span>
<svg style="left:162px;top:187px" width="33" height="26" viewBox="0 0 33 26"><defs><linearGradient id="lg2" x1="0" y1="0" x2="0" y2="1"><stop offset="0.300" stop-color="#fff"/><stop offset="1" stop-color="#e6eef1"/></linearGradient></defs><path d="M0 26L12 7L19.500 18L24.500 12.500L33 26Z" fill="url(#lg2)"/><circle cx="25.500" cy="3.500" r="3.200" fill="#fff"/></svg>
<span class="t" style="left:120px;top:228.5px;font-size:16px;font-weight:500;color:#fff">卡片模板</span>
<span class="t" style="left:120px;top:249px;font-size:12px;color:rgba(255,255,255,.62)">这是一个官方的 4x...</span>
<div class="abs" style="left:286px;top:143px;width:36px;height:36px;border-radius:18px;background:#4fc1df"></div>
<span class="t" style="left:264px;top:182px;width:80px;text-align:center;font-size:12px;color:#6a6a6a">支付宝</span>
<div class="abs" style="left:358px;top:143px;width:36px;height:36px;border-radius:18px;background:#4fc1df"></div>
<span class="t" style="left:336px;top:182px;width:80px;text-align:center;font-size:12px;color:#6a6a6a">微信乘车码</span>
<div class="abs" style="left:286px;top:204.700px;width:36px;height:36px;border-radius:18px;background:#4fc1df"></div>
<span class="t" style="left:264px;top:244.5px;width:80px;text-align:center;font-size:12px;color:#6a6a6a">文档</span>
<div class="abs" style="left:358px;top:204.700px;width:36px;height:36px;border-radius:18px;background:#4fc1df"></div>
<span class="t" style="left:336px;top:244.5px;width:80px;text-align:center;font-size:12px;color:#6a6a6a">还款</span>
<div class="abs" style="left:161px;top:38px;width:46px;height:105px;border-radius:5px;background:#272822;border:1px solid #3a3a37;box-shadow:0 2px 6px rgba(0,0,0,.3)"></div>
<span class="t" style="left:172px;top:51px;font-size:12px;font-weight:500;color:#4797f5">手机</span>
<span class="t" style="left:172px;top:85.500px;font-size:12px;font-weight:500;color:#f0f0f0">手表</span>
<span class="t" style="left:172px;top:119.500px;font-size:12px;font-weight:500;color:#f0f0f0">车机</span>
<div class="abs" style="left:2px;top:623px;width:529px;height:33px;background:#272822"></div>
<svg style="left:11px;top:635px" width="14" height="10" viewBox="0 0 14 10"><rect x="0" y="0" width="14" height="10" rx="5" fill="#6e737d"/><path d="M4 6.500L7 3.500L10 6.500" fill="none" stroke="#fff" stroke-width="1.300"/></svg>
<span class="t" id="fpath" style="left:31px;top:633px;font-size:13px;color:#e4e4e4">页面路径:<span id="fp2">cards/card/index</span></span>
<span class="t" style="left:192px;top:634px;font-size:12.400px;color:#3b82f6">复制</span>
<svg style="left:447.500px;top:631.500px" width="16" height="16" viewBox="0 0 26 26" fill="none" stroke="#e0e0e0" stroke-width="2.800" stroke-linejoin="round"><path d="M11 1.500H15L15.600 5.200L17.900 6.500L21.400 5.100L23.400 8.600L20.500 11V13.600L23.400 16L21.400 19.500L17.900 18.100L15.600 19.400L15 23.100H11L10.400 19.400L8.100 18.100L4.600 19.500L2.600 16L5.500 13.600V11L2.600 8.600L4.600 5.100L8.100 6.500L10.400 5.200Z" transform="translate(0,0.700)"/><circle cx="13" cy="13" r="3.500"/></svg>
<span class="t" style="left:469px;top:633px;font-size:13px;color:#e4e4e4">预览设置</span>
</div></div>
<div id="status" class="abs">
<svg style="left:16px;top:5px" width="12" height="12" viewBox="0 0 12 12" fill="none" stroke="#fff" stroke-width="1.100"><circle cx="6" cy="6" r="5.300"/><path d="M3.800 3.800L8.200 8.200M8.200 3.800L3.800 8.200"/></svg>
<span class="t sx" style="left:33px">1</span>
<svg style="left:43px;top:5px" width="13" height="12" viewBox="0 0 13 12" fill="none" stroke="#fff" stroke-width="1.100" stroke-linejoin="round"><path d="M6.500 0.800L12.300 11.300H0.700Z"/><path d="M6.500 4.500V8M6.500 9V10.200"/></svg>
<span class="t sx" style="left:60px">1</span>
<span class="t sx" style="left:835px;letter-spacing:-0.1px">行 13，列 14</span>
<span class="t sx" style="left:919px">空格: 2</span>
<span class="t sx" style="left:972px;letter-spacing:-0.5px">UTF-8</span>
<span class="t sx" style="left:1020px;letter-spacing:-1px;font-size:11.500px">LF</span>
<span class="t sx" style="left:1046px;letter-spacing:2.500px">{}</span><span class="t sx" style="left:1064.500px;letter-spacing:-0.7px">JSON</span>
<svg style="left:1110px;top:3px" width="16" height="18" viewBox="1110 749 16 18" fill="none" stroke="#fff" stroke-width="1.100"><path d="M1113.500 754V751H1123.300V758H1121L1119.500 759.500"/><circle cx="1116.200" cy="756.600" r="2.300" fill="#007acc"/><path d="M1111.600 763.200Q1111.800 759.600 1116.200 759.600Q1120.600 759.600 1120.800 763.200"/></svg>
<svg style="left:1140px;top:5.700px" width="14.600" height="10.500" viewBox="0 0 16 12" preserveAspectRatio="none"><rect x="0" y="0" width="16" height="12" rx="0.800" fill="#fff"/><path d="M0.500 0.800L8 7L15.500 0.800M0.500 11.500L6 5.500M15.500 11.500L10 5.500" fill="none" stroke="#007acc" stroke-width="1"/></svg>
<svg style="left:1172px;top:4px" width="13" height="14" viewBox="0 0 13 14" fill="none" stroke="#fff" stroke-width="1.100"><path d="M2.500 10V6A4 4 0 0 1 8 2.300M10.500 7.500V10L11.500 11H1.500L2.500 10M5 11.500Q6.500 14 8 11.500"/><circle cx="10.300" cy="3.500" r="2.200" fill="#fff" stroke="none"/></svg>
</div>
</body>
</html>
